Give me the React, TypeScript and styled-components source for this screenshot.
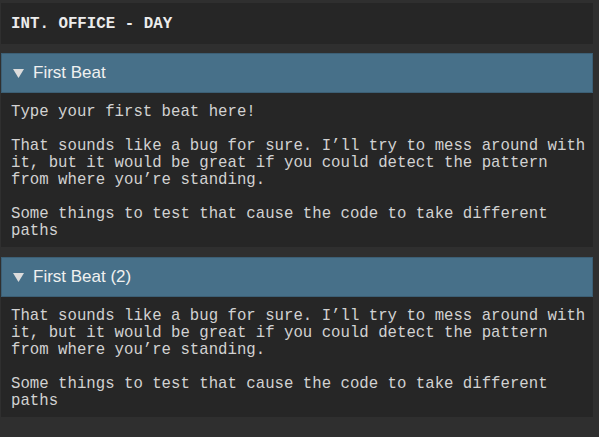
import styled, { createGlobalStyle } from "styled-components";

const GlobalStyle = createGlobalStyle`
  html, body {
    margin: 0;
    padding: 0;
    background: #2f2f2f;
  }
`;

const Page = styled.div`
  width: 599px;
  height: 437px;
  box-sizing: border-box;
  padding: 3px 6px 0 1px;
  background: #2f2f2f;
  display: flex;
  flex-direction: column;
  overflow: hidden;
`;

const SceneHeading = styled.div`
  height: 41px;
  box-sizing: border-box;
  padding: 0 10px;
  display: flex;
  align-items: center;
  background: #262626;
  color: #ececec;
  font-family: "Liberation Mono", "Courier New", monospace;
  font-weight: 700;
  font-size: 15.8px;
  margin-bottom: 9px;
`;

const Beat = styled.section`
  display: flex;
  flex-direction: column;
  margin-bottom: 10px;
`;

const BeatHeader = styled.div`
  height: 40px;
  box-sizing: border-box;
  display: flex;
  align-items: center;
  gap: 9px;
  padding: 0 11px;
  background: #477089;
  border: 1px solid #3c5f75;
  color: #f0f0f0;
  font-family: "Liberation Sans", Arial, sans-serif;
  font-size: 17px;
`;

const Caret = styled.svg`
  width: 11px;
  height: 9px;
  flex: none;
`;

const BeatBody = styled.div`
  background: #262626;
  color: #d2d2d2;
  font-family: "Liberation Mono", "Courier New", monospace;
  font-size: 15.7px;
  line-height: 17px;
  padding: 11px 3px 7px 10px;
  white-space: pre-wrap;
`;

const beats = [
  {
    title: "First Beat",
    text:
      "Type your first beat here!\n\nThat sounds like a bug for sure. I\u2019ll try to mess around with it, but it would be great if you could detect the pattern from where you\u2019re standing.\n\nSome things to test that cause the code to take different paths",
  },
  {
    title: "First Beat (2)",
    text:
      "That sounds like a bug for sure. I\u2019ll try to mess around with it, but it would be great if you could detect the pattern from where you\u2019re standing.\n\nSome things to test that cause the code to take different paths",
  },
];

export default function App() {
  return (
    <>
      <GlobalStyle />
      <Page>
        <SceneHeading>INT. OFFICE - DAY</SceneHeading>
        {beats.map((b) => (
          <Beat key={b.title}>
            <BeatHeader>
              <Caret viewBox="0 0 11 9">
                <polygon points="0,0 11,0 5.5,9" fill="#dcdcdc" />
              </Caret>
              {b.title}
            </BeatHeader>
            <BeatBody>{b.text}</BeatBody>
          </Beat>
        ))}
      </Page>
    </>
  );
}
